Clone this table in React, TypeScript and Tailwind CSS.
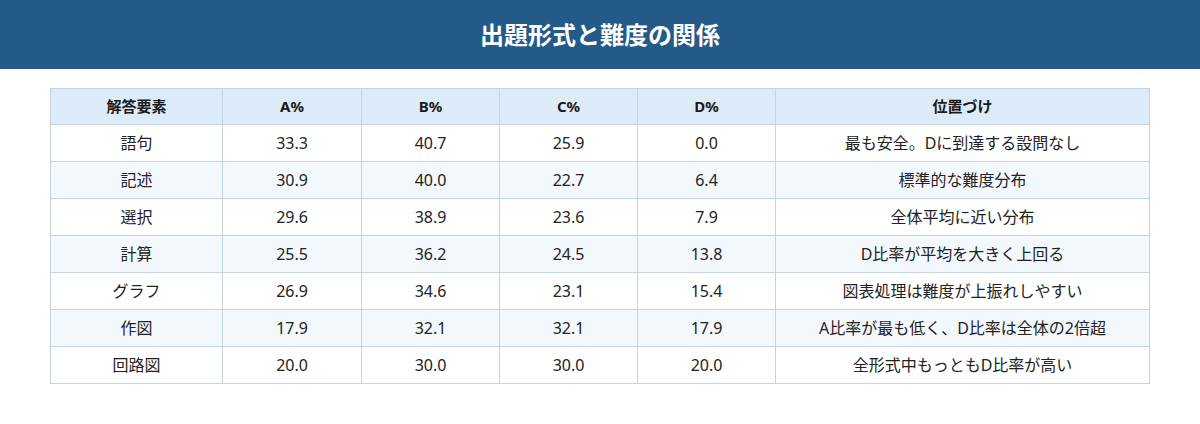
const rows = [
  { name: "語句", a: "33.3", b: "40.7", c: "25.9", d: "0.0", note: "最も安全。Dに到達する設問なし" },
  { name: "記述", a: "30.9", b: "40.0", c: "22.7", d: "6.4", note: "標準的な難度分布" },
  { name: "選択", a: "29.6", b: "38.9", c: "23.6", d: "7.9", note: "全体平均に近い分布" },
  { name: "計算", a: "25.5", b: "36.2", c: "24.5", d: "13.8", note: "D比率が平均を大きく上回る" },
  { name: "グラフ", a: "26.9", b: "34.6", c: "23.1", d: "15.4", note: "図表処理は難度が上振れしやすい" },
  { name: "作図", a: "17.9", b: "32.1", c: "32.1", d: "17.9", note: "A比率が最も低く、D比率は全体の2倍超" },
  { name: "回路図", a: "20.0", b: "30.0", c: "30.0", d: "20.0", note: "全形式中もっともD比率が高い" },
]

const headers = ["解答要素", "A%", "B%", "C%", "D%", "位置づけ"]
const widths = ["w-[172px]", "w-[139px]", "w-[138px]", "w-[138px]", "w-[138px]", "w-[374px]"]

export default function App() {
  return (
    <div
      className="w-[1200px] h-[424px] bg-white text-[#222]"
      style={{ fontFamily: '"Noto Sans", "Noto Sans CJK JP", sans-serif' }}
    >
      <div className="h-[69px] bg-[#245a87] flex items-center justify-center">
        <h1 className="text-[24px] font-bold text-white">出題形式と難度の関係</h1>
      </div>

      <div className="px-[50px] pt-[19px]">
        <table className="w-[1100px] table-fixed border-collapse text-[16px]">
          <thead>
            <tr className="bg-[#dcebf7]">
              {headers.map((h, i) => (
                <th
                  key={h}
                  className={`${widths[i]} h-[36px] border border-[#c3d4e4] font-bold text-center text-[#1a1a1a] text-[15px]`}
                >
                  {h}
                </th>
              ))}
            </tr>
          </thead>
          <tbody>
            {rows.map((r, i) => (
              <tr key={r.name} className={i % 2 === 1 ? "bg-[#f3f8fd]" : "bg-white"}>
                {[r.name, r.a, r.b, r.c, r.d, r.note].map((v, j) => (
                  <td key={j} className="h-[37px] border border-[#c3d4e4] text-center">
                    {v}
                  </td>
                ))}
              </tr>
            ))}
          </tbody>
        </table>
      </div>
    </div>
  )
}
